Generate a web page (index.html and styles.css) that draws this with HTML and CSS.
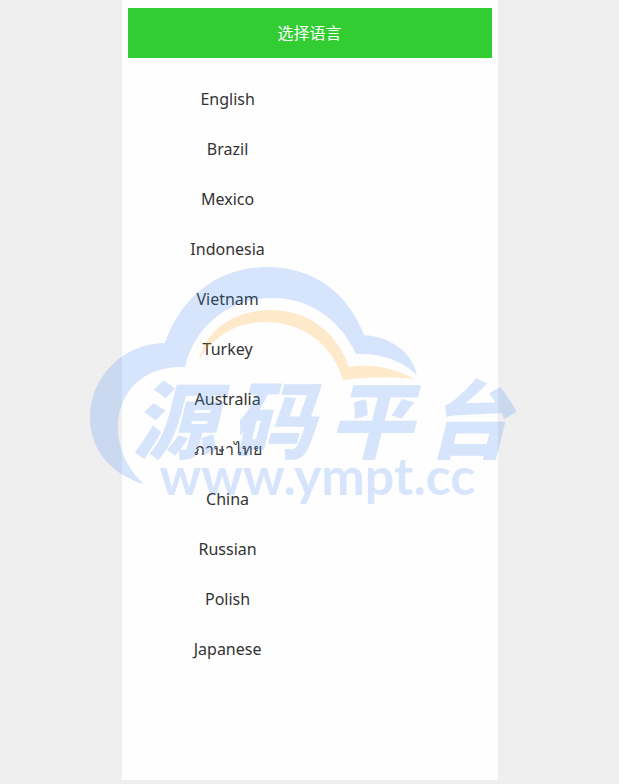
FILE: index.html
```html
<!DOCTYPE html>
<html lang="zh-CN">
<head>
    <meta charset="UTF-8">
    <meta name="viewport" content="width=device-width, initial-scale=1.0">
    <title>选择语言</title>
    <link rel="stylesheet" href="styles.css">
</head>
<body>
    <div class="container">
        <h1 class="title">选择语言</h1>

        <ul class="lang-list">
            <li><a href="#en">English</a></li>
            <li><a href="#br">Brazil</a></li>
            <li><a href="#mx">Mexico</a></li>
            <li><a href="#id">Indonesia</a></li>
            <li><a href="#vn">Vietnam</a></li>
            <li><a href="#tr">Turkey</a></li>
            <li><a href="#au">Australia</a></li>
            <li><a href="#th">ภาษาไทย</a></li>
            <li><a href="#cn">China</a></li>
            <li><a href="#ru">Russian</a></li>
            <li><a href="#pl">Polish</a></li>
            <li><a href="#jp">Japanese</a></li>
        </ul>

        <!-- watermark -->
        <div class="watermark">
            <svg class="cloud" viewBox="90 267 328 218" aria-hidden="true">
                <path fill="#3c87f0" d="M144 484 C112 475 90 450 90 418 C90 378 121 344 165 343 C181 296 219 267 267 267 C314 267 348 293 364 335 C391 337 412 352 417 375 C401 360 380 353 356 354 C340 319 309 298 273 298 C231 298 195 324 185 367 C145 365 118 391 118 427 C118 449 128 470 144 484Z"/>
                <path fill="#ff9b00" d="M199 360 C206 330 234 310 272 310 C310 311 337 333 349 367 C372 363 395 368 414 379 C390 376 366 377 343 380 C333 346 305 322 264 322 C238 322 214 335 199 360Z"/>
            </svg>
            <div class="brand">
                <div class="brand-name"><span>源</span><span>码</span><span>平</span><span>台</span></div>
                <div class="brand-url">www.ympt.cc</div>
            </div>
        </div>
    </div>
</body>
</html>
```
FILE: styles.css
```css
* {
    box-sizing: border-box;
    margin: 0;
    padding: 0;
}

body {
    font-family: "Noto Sans", "Noto Sans CJK SC", sans-serif;
    font-size: 16px;
    color: #333;
    background-color: #efefef;
}

.container {
    position: relative;
    max-width: 376px;
    min-height: calc(100vh - 4px);
    margin: 0 auto 4px;
    padding: 8px 6px;
    background-color: #fefefe;
}

.title {
    background-color: #32cd32;
    color: #fff;
    font-size: 16px;
    font-weight: normal;
    line-height: 50px;
    text-align: center;
}

.lang-list {
    width: 55%;
    margin-top: 16px;
    list-style: none;
}

.lang-list a {
    display: block;
    color: #333;
    line-height: 50px;
    text-align: center;
    text-decoration: none;
}

/* watermark over the page */
.watermark {
    position: absolute;
    top: 267px;
    left: -32px;
    width: 440px;
    opacity: 0.2;
    color: #3c87f0;
    pointer-events: none;
}

.cloud {
    display: block;
    width: 328px;
    height: 218px;
}

.brand {
    position: absolute;
    top: 108px;
    left: 43px;
}

.brand-name {
    display: flex;
    gap: 14px;
    font-family: "Noto Sans CJK SC", sans-serif;
    font-size: 84px;
    font-weight: 900;
    font-style: italic;
    line-height: 82px;
}

.brand-url {
    padding-left: 27px;
    font-family: Lato, sans-serif;
    font-size: 52px;
    font-weight: 700;
    line-height: 36px;
}
```
